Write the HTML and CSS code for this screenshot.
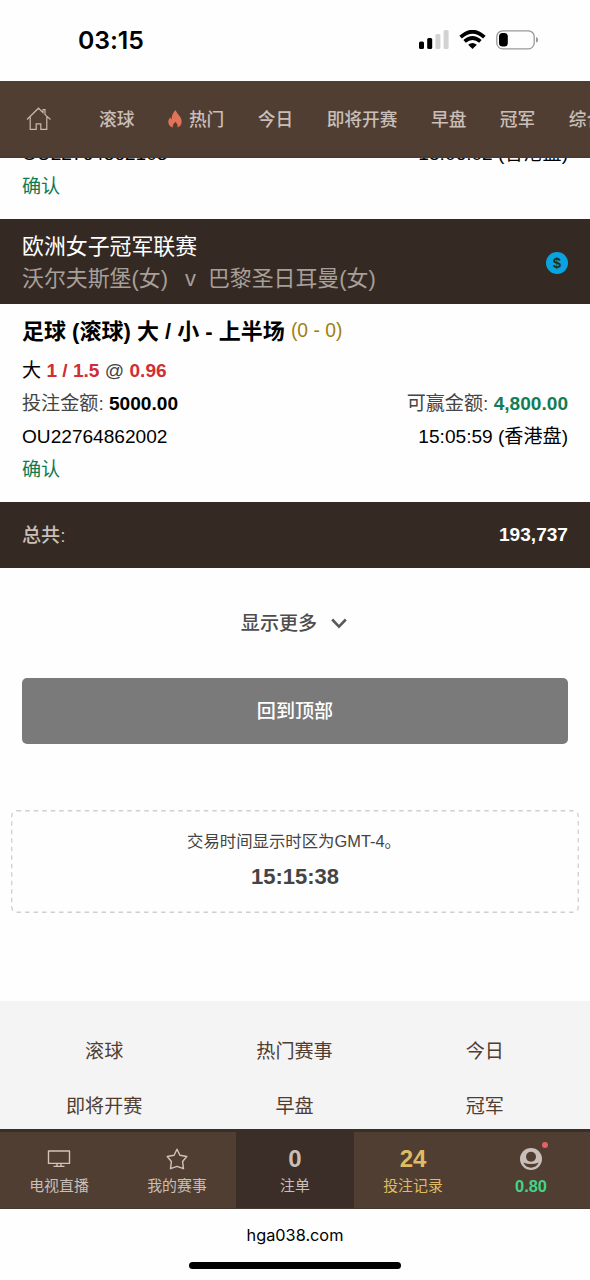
FILE: index.html
```html
<!DOCTYPE html>
<html lang="zh-CN">
<head>
<meta charset="utf-8">
<title>投注记录</title>
<link rel="stylesheet" href="styles.css">
</head>
<body>
<div class="screen">
  <header class="status">
    <div class="clock">03:15</div>
    <div class="indicators">
      <svg class="signal" width="30" height="20" viewBox="0 0 30 20"><rect x="0" y="11.5" width="5" height="7.5" rx="1.5"/><rect x="8.2" y="8" width="5" height="11" rx="1.5"/><rect class="dim" x="16.4" y="4" width="5" height="15" rx="1.5"/><rect class="dim" x="24.6" y="0" width="5" height="19" rx="1.5"/></svg>
      <svg class="wifi" width="27" height="20" viewBox="0 0 27 20"><path d="M13.5 19 9.2 14.8Q13.5 11.4 17.8 14.8Z"/><path class="arc" d="M5.6 11.4Q13.5 4.6 21.4 11.4M1.6 7.2Q13.5 -3.8 25.4 7.2"/></svg>
      <svg class="battery" width="44" height="20" viewBox="0 0 44 20"><rect class="case" x=".8" y=".8" width="37.4" height="18" rx="5.8"/><rect x="3" y="3" width="8.8" height="13.6" rx="3.5"/><path class="tip" d="M40 7q2.2.4 2.2 2.8T40 12.6Z"/></svg>
    </div>
  </header>
  <nav class="topnav">
    <svg class="home" width="26" height="24" viewBox="0 0 26 24"><path d="M1 12.5 12.5 1.2 17 5.6V2.5h2V7.6L24.5 12.5M4.2 10V22.4H10.2V16.8H14.8V22.4H20.8V10"/></svg>
    <span>滚球</span>
    <span class="hot"><svg width="14" height="18" viewBox="0 0 14 18"><path d="M7.6 0C8.3 3.6 14 6.4 13.6 12C13.4 15.2 11.7 17 9.4 17.4C10.4 14.9 8.6 13.2 7.4 11.7C6.5 13.2 4.2 14.6 5 17.4C1.8 16.8.3 14.5.3 11.7C.4 9.7 1.4 8.3 2.4 7.2C2.7 8.2 3 8.8 3.7 9.2C3.5 5.5 5 2.5 7.6 0Z"/></svg>热门</span>
    <span>今日</span><span>即将开赛</span><span>早盘</span><span>冠军</span><span>综合</span>
  </nav>
  <main class="content">
    <section class="bet previous">
      <div class="row"><span>OU22764862103</span><span>15:06:02 (香港盘)</span></div>
      <div class="row confirmed">确认</div>
    </section>
    <section class="match">
      <div><div class="league">欧洲女子冠军联赛</div><div class="teams"><span>沃尔夫斯堡(女)</span><span class="versus">v</span><span>巴黎圣日耳曼(女)</span></div></div>
      <div class="coin">$</div>
    </section>
    <section class="bet">
      <h1 class="market">足球 (滚球) 大 / 小 - 上半场 <span class="score">(0 - 0)</span></h1>
      <div class="row odds"><span>大 <b>1 / 1.5</b> <i>@</i> <b>0.96</b></span></div>
      <div class="row amounts"><span>投注金额: <b>5000.00</b></span><span>可赢金额: <b class="win">4,800.00</b></span></div>
      <div class="row"><span>OU22764862002</span><span>15:05:59 (香港盘)</span></div>
      <div class="row confirmed">确认</div>
    </section>
    <section class="total"><span>总共:</span><b>193,737</b></section>
    <div class="more"><span>显示更多</span><svg width="16" height="11" viewBox="0 0 16 11"><path d="M1.2 1.5 8 8.7 14.8 1.5"/></svg></div>
    <button class="to-top">回到顶部</button>
    <section class="timezone">
      <svg class="outline" width="568" height="103"><rect x=".75" y=".75" width="566.5" height="101.5" rx="5"/></svg>
      <div>交易时间显示时区为GMT-4。</div><strong>15:15:38</strong>
    </section>
    <section class="links"><span>滚球</span><span>热门赛事</span><span>今日</span><span>即将开赛</span><span>早盘</span><span>冠军</span></section>
  </main>
  <nav class="tabs">
    <div class="tab"><svg width="24" height="24" viewBox="0 0 24 24"><path d="M1.5 4H22.5V16.4H1.5ZM10 16.4V19M14 16.4V19M6.5 19.4H17.5"/></svg><span>电视直播</span></div>
    <div class="tab"><svg width="24" height="24" viewBox="0 0 24 24"><path d="M12 2.2 14.9 8.3 21.8 9.5 17.6 14.5 18.5 21.7 12 19.4 5.5 21.7 6.4 14.5 2.2 9.5 9.1 8.3Z"/></svg><span>我的赛事</span></div>
    <div class="tab active"><b>0</b><span>注单</span></div>
    <div class="tab gold"><b>24</b><span>投注记录</span></div>
    <div class="tab account"><svg width="24" height="24" viewBox="0 0 24 24"><circle class="disc" cx="12" cy="12" r="11"/><circle class="hole" cx="12" cy="9.8" r="5"/><path class="hole" d="M4.2 15.6Q12 18.6 19.8 15.6Q17 20.8 12 20.8T4.2 15.6Z"/></svg><span>0.80</span><i class="dot"></i></div>
  </nav>
  <footer class="browser"><div>hga038.com</div><div class="handle"></div></footer>
</div>
</body>
</html>
```
FILE: styles.css
```css
* { box-sizing: border-box; }
body { margin: 0; background: #fefefe; color: #000; font: 19.1px "Liberation Sans", "Noto Sans CJK SC", sans-serif; }
.screen { width: 590px; height: 1280px; display: flex; flex-direction: column; overflow: hidden; }
svg { display: block; flex: none; }
.status { height: 81px; flex: none; display: flex; justify-content: space-between; padding: 0 50px 0 78px; }
.clock { font: 600 24.8px/81px Inter, sans-serif; letter-spacing: -.1px; }
.indicators { display: flex; padding-top: 30px; }
.wifi { margin-left: 10px; }
.battery { margin-left: 10px; }
.dim { fill: #d2d2d2; }
.arc { fill: none; stroke: #000; stroke-width: 3.7; }
.case { fill: none; stroke: #999; stroke-width: 1.3; }
.tip { fill: #999; }
.topnav { position: relative; z-index: 1; height: 77px; flex: none; display: flex; align-items: center; gap: 33.5px; padding: 0 0 0 26px; background: #503e33; border-bottom: 2px solid #4c3a30; color: #c9bfb8; font-size: 17.7px; font-weight: 500; white-space: nowrap; overflow: hidden; }
.topnav span { padding-bottom: 2px; }
.home { margin-right: 13.5px; fill: none; stroke: #c9b9a8; stroke-width: 1.2; }
.hot { display: flex; align-items: center; gap: 7px; }
.hot svg { margin-top: 2px; fill: #df7459; }
.content { flex: 1; min-height: 0; margin-top: -21px; overflow: hidden; }
.bet { padding: 10px 22px 16px; }
.previous { padding-top: 0; }
.row { height: 33px; line-height: 33px; display: flex; justify-content: space-between; white-space: pre; }
.confirmed { line-height: 34px; color: #0d7b50; }
.match { height: 85px; padding: 12px 22px 9px; background: #352a23; display: flex; justify-content: space-between; align-items: center; font-size: 21.9px; line-height: 32px; }
.league { color: #fff; }
.teams { color: #a79f99; display: flex; }
.versus { margin: 0 12px 0 17px; }
.coin { width: 22px; height: 22px; margin-top: -1px; border-radius: 50%; background: #08a4df; color: #2b2926; font: bold 15px/22px "Liberation Sans", sans-serif; text-align: center; }
.market { margin: 0 0 6px; height: 34px; line-height: 35px; font-size: 22px; white-space: nowrap; }
.score { font-size: 19.3px; font-weight: 400; color: #a27e13; position: relative; top: -2px; }
.odds b { color: #d12d35; }
.odds i { color: #444; font-style: normal; }
.amounts { color: #444; }
.amounts b { color: #000; }
.amounts .win { color: #147c55; }
.total { height: 66px; padding: 0 22px; background: #352a23; display: flex; justify-content: space-between; align-items: center; color: #c9c0b9; font-weight: 500; }
.total span { padding-bottom: 2px; }
.total b { color: #fff; }
.more { height: 110px; padding-right: 2px; display: flex; align-items: center; justify-content: center; gap: 14px; color: #4d4d4d; font-weight: 500; }
.more span { padding-bottom: 2px; }
.more svg { fill: none; stroke: #5a5a5a; stroke-width: 2.6; }
.to-top { display: block; width: 546px; height: 66px; margin: 0 auto; padding: 0 0 2px; border: 0; border-radius: 5px; background: #7a7a7a; color: #fff; font: 500 19.1px "Liberation Sans", "Noto Sans CJK SC", sans-serif; }
.timezone { position: relative; width: 568px; height: 103px; margin: 66px auto 88px; padding-top: 15px; text-align: center; font-size: 16.4px; line-height: 32px; color: #444; }
.timezone div { padding-right: 2px; }
.timezone strong { display: block; font-size: 22px; line-height: 40px; }
.outline { position: absolute; inset: 0; fill: none; stroke: #cfcfcf; stroke-width: 1.3; stroke-dasharray: 4.5 4; }
.links { height: 140px; padding: 23px 10px 0 9px; background: #f4f4f4; display: grid; grid-template-columns: repeat(3, 1fr); grid-auto-rows: 55px; line-height: 55px; text-align: center; color: #503d32; }
.tabs { height: 80px; flex: none; display: flex; background: #503e33; border-top: 3px solid #392e28; border-bottom: 1px solid #453a33; color: #c9bfb8; }
.tab { position: relative; width: 118px; display: flex; flex-direction: column; align-items: center; padding-top: 15px; font-size: 14.9px; line-height: 30px; }
.tab svg { fill: none; stroke: #d1c3b7; stroke-width: 1.4; stroke-linejoin: round; }
.tab b { height: 24px; font-size: 24px; line-height: 24px; }
.tab span { height: 28px; }
.active { background: #3b2d27; }
.gold { color: #dfbb64; }
.tab .disc { fill: #c9bfb8; stroke: none; }
.tab .hole { fill: #503e33; stroke: none; }
.account span { color: #42d487; font-weight: 700; font-size: 16.4px; line-height: 31px; }
.dot { position: absolute; left: 70px; top: 10px; width: 6px; height: 6px; border-radius: 50%; background: #e66163; }
.browser { height: 71px; flex: none; display: flex; flex-direction: column; align-items: center; padding-top: 13px; font: 16.3px/26px Inter, sans-serif; }
.handle { width: 212px; height: 7px; margin-top: 14px; border-radius: 4px; background: #000; }
```
